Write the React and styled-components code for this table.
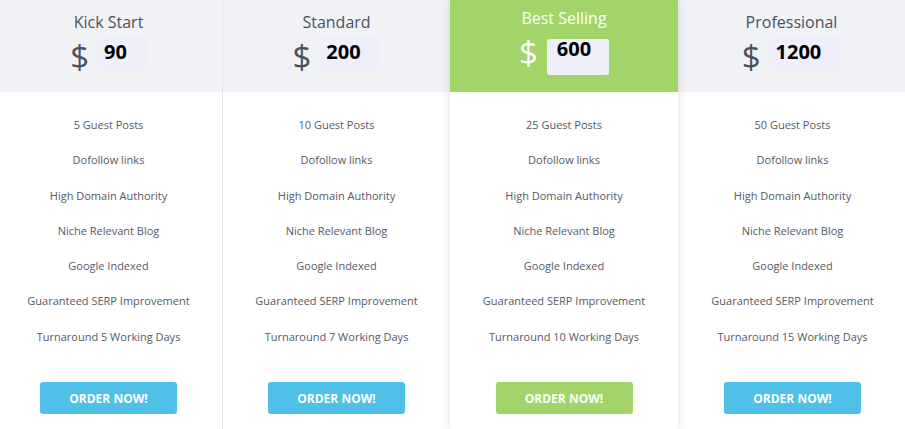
import React from 'react'
import styled, { createGlobalStyle } from 'styled-components'

const GlobalStyle = createGlobalStyle`
  html, body {
    margin: 0;
    padding: 0;
    background: #ffffff;
    font-family: "Open Sans", "Liberation Sans", sans-serif;
  }
`;

const plans = [
  { title: 'Kick Start', price: '90', posts: 5, days: 5, shiftL: 0, shiftR: 5, headShift: 5 },
  { title: 'Standard', price: '200', posts: 10, days: 7, shiftL: 0, shiftR: 0, headShift: 0 },
  { title: 'Best Selling', price: '600', posts: 25, days: 10, featured: true, shiftL: 0, shiftR: 0, headShift: 0 },
  { title: 'Professional', price: '1200', posts: 50, days: 15, shiftL: 2, shiftR: 0, headShift: 0 },
];

const features = (p) => [
  `${p.posts} Guest Posts`,
  'Dofollow links',
  'High Domain Authority',
  'Niche Relevant Blog',
  'Google Indexed',
  'Guaranteed SERP Improvement',
  `Turnaround ${p.days} Working Days`,
];

const App = () => {
  return (
    <>
      <GlobalStyle />
      <Table>
        {plans.map((p, i) => (
          <Plan key={p.title} $featured={p.featured} $divider={i === 0}>
            <PlanHeader $featured={p.featured} $right={p.headShift}>
              <PlanTitle $featured={p.featured}>{p.title}</PlanTitle>
              <PriceRow>
                <Dollar $featured={p.featured}>$</Dollar>
                <PriceBox $featured={p.featured}>{p.price}</PriceBox>
              </PriceRow>
            </PlanHeader>
            <FeatureList $left={p.shiftL} $right={p.shiftR}>
              {features(p).map((f) => (
                <FeatureItem key={f}>{f}</FeatureItem>
              ))}
            </FeatureList>
            <ButtonRow $left={p.shiftL} $right={p.shiftR}>
              <OrderButton $featured={p.featured}>ORDER NOW!</OrderButton>
            </ButtonRow>
          </Plan>
        ))}
      </Table>
    </>
  )
}

export default App;

const Table = styled.div`
  display: grid;
  grid-template-columns: 223px 227px 228px 227px;
  width: 905px;
  height: 429px;
  overflow: hidden;
`;

const Plan = styled.div`
  display: flex;
  flex-direction: column;
  background: #ffffff;
  position: relative;
  border-right: ${(p) => (p.$divider ? '1px solid #e6e7ea' : 'none')};
  z-index: ${(p) => (p.$featured ? 2 : 1)};
  box-shadow: ${(p) => (p.$featured ? '0 0 10px rgba(0, 0, 0, 0.13)' : 'none')};
`;

const PlanHeader = styled.div`
  height: 92px;
  box-sizing: border-box;
  padding-top: ${(p) => (p.$featured ? '6px' : '10px')};
  padding-right: ${(p) => p.$right}px;
  background: ${(p) => (p.$featured ? '#a2d46a' : '#f1f2f5')};
  display: flex;
  flex-direction: column;
  align-items: center;
`;

const PlanTitle = styled.div`
  font-size: 16px;
  line-height: 24px;
  color: ${(p) => (p.$featured ? '#ffffff' : '#4a5160')};
`;

const PriceRow = styled.div`
  display: flex;
  align-items: flex-start;
  gap: 9px;
  margin-top: 3px;
`;

const Dollar = styled.span`
  font-size: 33px;
  line-height: 40px;
  color: ${(p) => (p.$featured ? '#ffffff' : '#4a5160')};
`;

const PriceBox = styled.span`
  display: block;
  background: #eeeffa;
  color: #000000;
  font-weight: 700;
  font-size: 20px;
  line-height: ${(p) => (p.$featured ? '20px' : '24px')};
  padding: ${(p) => (p.$featured ? '0 18px 16px 10px' : '4px 20px 6px 6px')};
  margin-top: ${(p) => (p.$featured ? '6px' : '-1px')};
  border-radius: 2px;
`;

const FeatureList = styled.ul`
  list-style: none;
  margin: 0;
  padding: 15px ${(p) => p.$right}px 0 ${(p) => p.$left}px;
`;

const FeatureItem = styled.li`
  height: 35.3px;
  line-height: 35.3px;
  text-align: center;
  font-size: 11px;
  color: #555a64;
`;

const ButtonRow = styled.div`
  display: flex;
  justify-content: center;
  padding: 28px ${(p) => p.$right}px 0 ${(p) => p.$left}px;
`;

const OrderButton = styled.button`
  width: 137px;
  height: 32px;
  border: none;
  border-radius: 3px;
  background: ${(p) => (p.$featured ? '#a2d46a' : '#4fc1e9')};
  color: #ffffff;
  font-family: "Open Sans", "Liberation Sans", sans-serif;
  font-weight: 700;
  font-size: 12px;
  cursor: pointer;
`;
